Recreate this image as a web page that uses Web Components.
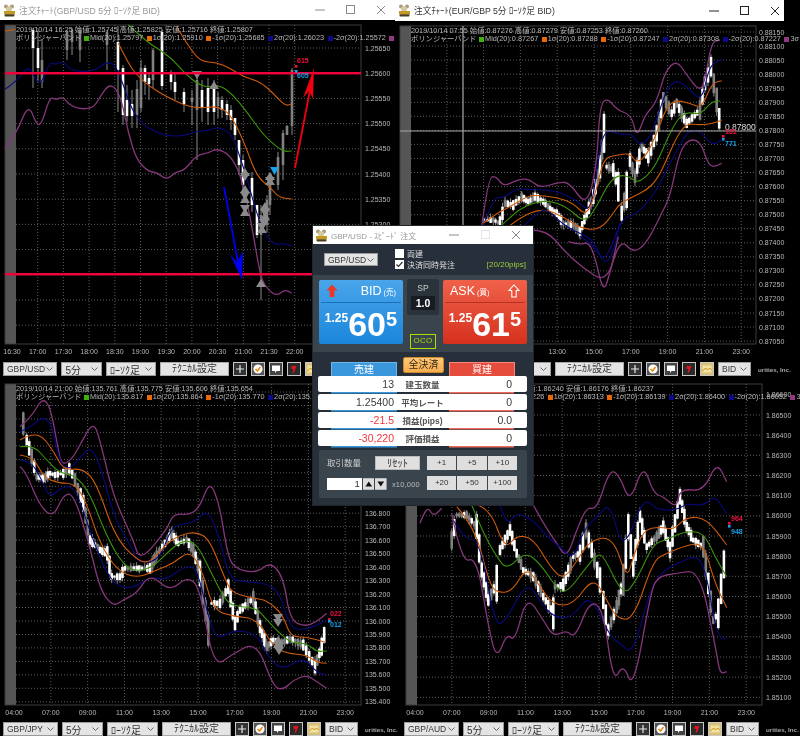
<!DOCTYPE html>
<html lang="ja">
<head>
<meta charset="utf-8">
<title>注文チャート</title>
<style>
  html, body { margin: 0; background: #000; }
</style>
</head>
<body>
<fx-desktop>
  <fx-window caption="注文ﾁｬｰﾄ(GBP/USD 5分 ﾛｰｿｸ足 BID)" box="0,0,395,380" bar="395">
    <fx-chart name="gu"></fx-chart>
  </fx-window>
  <fx-window caption="注文ﾁｬｰﾄ(EUR/GBP 5分 ﾛｰｿｸ足 BID)" box="395,0,405,380" bar="389" active>
    <fx-chart name="eg"></fx-chart>
  </fx-window>
  <fx-window box="0,380,400,356">
    <fx-chart name="gj"></fx-chart>
  </fx-window>
  <fx-window box="400,380,400,356">
    <fx-chart name="ga"></fx-chart>
  </fx-window>
  <fx-order></fx-order>
</fx-desktop>

<script>
const FONT = '"Liberation Sans", "Noto Sans CJK JP", sans-serif';

// coordinates below were read off 3x crops, so they get divided back down
const zoom = (pts, ox, oy) => pts.map(([x, y]) => [ox + x / 3, oy + y / 3]);

// axis and time labels that sit fully under the order dialog are left out
const underDialog = (x, y) => x > 313 && x < 515 && y - 3 >= 226 && y + 3 <= 505;

function smooth(pts) {
  let d = `M${pts[0][0].toFixed(1)} ${pts[0][1].toFixed(1)}`;
  for (let i = 1; i < pts.length - 1; i++) {
    const mx = (pts[i][0] + pts[i + 1][0]) / 2;
    const my = (pts[i][1] + pts[i + 1][1]) / 2;
    d += `Q${pts[i][0].toFixed(1)} ${pts[i][1].toFixed(1)} ${mx.toFixed(1)} ${my.toFixed(1)}`;
  }
  const last = pts[pts.length - 1];
  return d + `L${last[0].toFixed(1)} ${last[1].toFixed(1)}`;
}

// dense candles strung along a path; fixed seed so every run draws the same
function candlesAlong(pts, seed) {
  let s = seed;
  const rnd = () => (s = (s * 9301 + 49297) % 233280) / 233280;
  const out = [];
  for (let i = 0; i < pts.length - 1; i++) {
    const [x0, y0] = pts[i], [x1, y1] = pts[i + 1];
    const n = Math.max(1, Math.round(Math.abs(x1 - x0) / 2.6));
    for (let k = 0; k < n; k++) {
      const x = x0 + (x1 - x0) * k / n, y = y0 + (y1 - y0) * k / n;
      const h = 2 + rnd() * 5 + Math.abs(y1 - y0) / n;
      const top = y - h / 2, bot = y + h / 2;
      out.push([x, top - rnd() * 4, top, bot, bot + rnd() * 4, rnd() < 0.72 ? 'w' : 'g']);
    }
  }
  return out;
}

const LINE = { p3: '#86367a', b2: '#08087e', o1: '#d05c0c', g: '#3a930a' };

const CHARTS = {
  gu: {
    x: 0, top: 20, width: 395, height: 342, frame: [5, 25, 361, 344], labelX: 365,
    pair: 'GBP/USD', barPad: 3,
    ohlc: '2019/10/14 16:25 始値:1.25745 高値:1.25825 安値:1.25716 終値:1.25807',
    legend: ['1.25797', '1.25910', '1.25685', '1.26023', '1.25572'], three: '3',
    axis: { start: 1.2565, step: -0.0005, y: 48, dy: 25.2, count: 12, dec: 5 },
    times: ['16:30', '17:00', '17:30', '18:00', '18:30', '19:00', '19:30', '20:00', '20:30', '21:00', '21:30', '22:00'].map((t, i) => [t, 12 + i * 25.7]),
    lines: [
      [LINE.o1, [[5, 31], [15, 29.5]]],
      [LINE.p3, zoom([[15, 445], [50, 400], [85, 310], [110, 375], [125, 372], [150, 290], [165, 300], [190, 290], [205, 312], [235, 327], [280, 325], [300, 290], [325, 255], [345, 262], [365, 300], [385, 400], [410, 480], [445, 515], [470, 517], [500, 540], [525, 517], [555, 510], [590, 465], [625, 460], [650, 445], [690, 465], [720, 520], [745, 620], [771, 770], [785, 840], [805, 870], [830, 888], [855, 868], [875, 880]], 0, 0)],
      [LINE.b2, zoom([[15, 268], [50, 245], [85, 195], [110, 245], [125, 250], [150, 185], [165, 195], [190, 183], [205, 205], [235, 215], [285, 212], [320, 185], [345, 195], [365, 240], [395, 330], [430, 375], [465, 395], [500, 408], [555, 408], [590, 392], [625, 392], [655, 380], [695, 400], [720, 470], [745, 550], [770, 640], [790, 690], [800, 710], [825, 735], [850, 730], [875, 737]], 0, 0)],
      [LINE.o1, zoom([[530, 80], [560, 130], [600, 185], [650, 187], [690, 205], [730, 230], [780, 245], [820, 280], [855, 318], [875, 312]], 0, 0)],
      [LINE.o1, zoom([[355, 130], [385, 190], [410, 225], [450, 260], [500, 290], [550, 315], [600, 325], [650, 318], [690, 340], [730, 420], [770, 530], [810, 560], [835, 592], [875, 597]], 0, 0)],
      [LINE.g, zoom([[385, 75], [440, 125], [480, 150], [520, 180], [550, 215], [590, 250], [620, 262], [660, 255], [700, 285], [740, 335], [790, 405], [830, 440], [855, 455], [875, 453]], 0, 0)]
    ],
    candles: [
      [33, 28, 30, 48, 88, 'w'], [38, 30, 48, 68, 82, 'w'], [42, 40, 60, 82, 88, 'g'], [67, 30, 32, 50, 60, 'g'], [72, 28, 30, 42, 55, 'g'], [80, 28, 30, 50, 62, 'g'], [107, 30, 32, 45, 70, 'g'],
      [118, 26, 42, 70, 112, 'w'], [123, 65, 68, 115, 125, 'w'], [127, 85, 100, 116, 122, 'w'], [132, 90, 104, 116, 128, 'w'], [137, 80, 89, 115, 128, 'g'], [141, 60, 68, 108, 112, 'g'], [145, 65, 68, 82, 95, 'w'], [149, 72, 78, 84, 100, 'w'], [153, 48, 50, 80, 88, 'g'],
      [162, 30, 32, 86, 90, 'w'], [171, 70, 74, 82, 90, 'w'], [175, 72, 82, 92, 100, 'w'], [184, 88, 92, 104, 112, 'w'], [192, 90, 98, 102, 125, 'g'], [197, 75, 80, 110, 160, 'g'], [202, 80, 90, 108, 122, 'w'], [208, 78, 88, 112, 125, 'w'], [214, 80, 88, 112, 125, 'w'],
      [218, 92, 97, 106, 118, 'g'], [222, 96, 100, 110, 118, 'w'], [227, 100, 104, 115, 120, 'w'], [231, 105, 110, 120, 130, 'w'], [235, 118, 118, 135, 140, 'w'], [239, 140, 140, 165, 175, 'w'], [243, 155, 160, 185, 195, 'w'], [252, 172, 178, 205, 212, 'w'], [257, 205, 205, 235, 238, 'w'],
      [261, 205, 215, 235, 300, 'g'], [267, 195, 200, 225, 232, 'g'], [270, 175, 180, 205, 215, 'g'], [278, 152, 157, 185, 190, 'g'], [283, 130, 133, 165, 180, 'g'], [287, 125, 126, 135, 135, 'g'], [292, 68, 70, 126, 135, 'g']
    ],
    hlines: [[73, 5, 361], [274, 5, 314]],
    ups: [[214, 86], [245, 173], [245, 190], [245, 200], [245, 213], [265, 207], [265, 217], [262, 230], [270, 177], [270, 182], [261, 284]],
    downs: [[197, 74], [245, 176], [245, 195], [245, 208], [265, 212], [262, 226], [270, 180], [264, 222]],
    blueDown: [274.5, 170],
    arrows: [
      ['#f00010', [[295, 168], [310, 90]], [[314, 68], [303, 98], [309, 91], [313, 99]]],
      ['#0000f0', [[224, 187], [238, 262]], [[242, 280], [230, 254], [237, 262], [243, 251]]]
    ],
    tags: [['615', 297, 63, '#f0103f', 296, 66], ['605', 297, 78, '#18a0e8', 296, 71]]
  },
  eg: {
    x: 395, top: 21, width: 405, height: 341, frame: [400, 26, 756, 344], labelX: 759,
    pair: 'EUR/GBP', barPad: 1,
    ohlc: '2019/10/14 07:55 始値:0.87276 高値:0.87279 安値:0.87253 終値:0.87260',
    legend: ['0.87267', '0.87288', '0.87247', '0.87308', '0.87227'], three: '3σ',
    axis: { start: 0.8815, step: -0.0005, y: 32, dy: 14.05, count: 23, dec: 5 },
    times: ['04:00', '07:00', '09:00', '11:00', '13:00', '15:00', '17:00', '19:00', '21:00', '23:00'].map((t, i) => [t, 410 + i * 36.8]),
    lines: [
      [LINE.p3, zoom([[245, 680], [265, 530], [290, 530], [310, 560], [350, 540], [385, 535], [420, 565], [480, 545], [510, 550], [560, 620], [590, 500], [600, 310], [625, 295], [650, 330], [695, 345], [710, 415], [735, 345], [755, 325], [775, 290], [795, 215], [830, 180], [860, 225], [900, 275], [915, 240], [935, 125], [960, 120]], 400, 0)],
      [LINE.b2, zoom([[245, 690], [280, 590], [310, 595], [350, 565], [400, 570], [460, 570], [530, 600], [570, 640], [590, 520], [610, 385], [660, 405], [695, 400], [710, 430], [740, 430], [770, 360], [800, 265], [830, 240], [860, 260], [905, 305], [925, 210], [945, 185], [965, 180]], 400, 0)],
      [LINE.o1, zoom([[250, 670], [290, 640], [330, 620], [380, 590], [410, 585], [470, 592], [520, 610], [560, 650], [590, 570], [610, 475], [650, 465], [690, 460], [710, 490], [740, 465], [770, 400], [800, 320], [830, 300], [870, 310], [905, 325], [935, 250], [965, 242]], 400, 0)],
      [LINE.g, zoom([[260, 720], [330, 650], [380, 615], [440, 600], [500, 620], [555, 670], [590, 620], [625, 550], [655, 525], [690, 530], [710, 548], [740, 530], [770, 490], [800, 420], [830, 360], [860, 335], [900, 345], [935, 305], [960, 303]], 400, 0)],
      [LINE.o1, zoom([[300, 700], [360, 650], [430, 625], [490, 650], [540, 685], [600, 690], [640, 640], [660, 610], [700, 590], [740, 570], [770, 540], [800, 480], [830, 410], [860, 370], [900, 375], [940, 370], [965, 360]], 400, 0)],
      [LINE.b2, zoom([[360, 690], [410, 640], [440, 625], [490, 675], [540, 700], [580, 720], [615, 800], [645, 745], [660, 660], [710, 640], [740, 610], [770, 570], [810, 490], [850, 415], [870, 390], [905, 395], [935, 437], [965, 420]], 400, 0)],
      [LINE.p3, zoom([[390, 690], [440, 690], [490, 750], [550, 805], [620, 850], [660, 715], [700, 760], [740, 730], [785, 640], [810, 590], [835, 470], [860, 420], [900, 420], [925, 495], [945, 500], [965, 490]], 400, 0)],
      [LINE.p3, zoom([[115, 125], [150, 135], [175, 125], [195, 170], [220, 280], [240, 220], [265, 110]], 530, 200)],
      [LINE.b2, zoom([[150, 108], [185, 130], [220, 183], [245, 140], [270, 70]], 530, 200)]
    ],
    path: zoom([[255, 660], [280, 660], [300, 670], [315, 610], [340, 615], [365, 590], [385, 605], [405, 590], [430, 605], [450, 625], [470, 640], [490, 670], [520, 675], [540, 695], [560, 640], [580, 590], [600, 500], [612, 400], [620, 500], [640, 510], [655, 560], [665, 640], [680, 570], [690, 480], [705, 530], [725, 440], [745, 470], [770, 400], [790, 290], [815, 340], [830, 310], [860, 370], [900, 330], [915, 250], [933, 200], [950, 300], [965, 410]], 400, 0),
    tags: [['181', 725, 134, '#f0103f', 723, 136], ['771', 725, 146, '#18a0e8', 723, 139]],
    cross: [463, 131],
    crossLabel: ['0.87800', 725, 130]
  },
  gj: {
    x: 0, top: 380, width: 400, height: 342, frame: [5, 384, 361, 705], labelX: 365,
    pair: 'GBP/JPY', barPad: 3,
    ohlc: '2019/10/14 21:00 始値:135.761 高値:135.775 安値:135.606 終値:135.654',
    legend: ['135.817', '135.864', '135.770', '135.911', '135.723'], three: '3σ', limit: 4,
    axis: { start: 137.7, step: -0.1, y: 392, dy: 13.47, count: 24, dec: 3 },
    times: ['04:00', '07:00', '09:00', '11:00', '13:00', '15:00', '17:00', '19:00', '21:00', '23:00'].map((t, i) => [t, 14 + i * 36.8]),
    lines: [
      [LINE.p3, zoom([[60, 140], [95, 110], [125, 55], [150, 75], [175, 210], [185, 255], [215, 240], [245, 185], [280, 125], [300, 180], [340, 350], [400, 480], [420, 545], [500, 450], [520, 400], [570, 405], [600, 380], [630, 300], [660, 380], [680, 510], [700, 565], [770, 580], [810, 545], [850, 590], [870, 720], [915, 740], [950, 725], [980, 700]], 0, 380)],
      [LINE.b2, zoom([[60, 155], [95, 140], [125, 110], [155, 130], [180, 250], [210, 270], [245, 225], [275, 200], [305, 270], [345, 420], [400, 510], [415, 550], [480, 540], [515, 435], [580, 430], [625, 385], [660, 480], [690, 600], [740, 605], [800, 610], [840, 640], [870, 745], [920, 750], [980, 720]], 0, 380)],
      [LINE.o1, zoom([[60, 180], [85, 165], [125, 165], [165, 220], [190, 270], [250, 265], [290, 310], [345, 470], [410, 540], [450, 550], [500, 490], [540, 465], [590, 455], [630, 480], [680, 610], [700, 640], [760, 655], [800, 660], [850, 705], [870, 770], [920, 770], [975, 787]], 0, 380)],
      [LINE.g, zoom([[60, 200], [100, 195], [140, 240], [180, 280], [225, 285], [270, 340], [320, 470], [370, 555], [410, 575], [460, 560], [510, 510], [550, 480], [590, 490], [630, 570], [680, 670], [720, 680], [770, 685], [800, 720], [850, 770], [880, 790], [920, 790], [950, 815], [980, 813]], 0, 380)],
      [LINE.o1, zoom([[60, 225], [100, 230], [130, 290], [175, 310], [225, 310], [260, 370], [300, 490], [350, 570], [410, 595], [470, 570], [520, 550], [570, 510], [610, 580], [640, 690], [700, 710], [770, 715], [820, 800], [860, 820], [920, 825], [950, 848], [980, 850]], 0, 380)],
      [LINE.b2, zoom([[60, 240], [95, 245], [125, 300], [150, 355], [185, 320], [225, 320], [265, 440], [310, 560], [350, 620], [400, 625], [450, 590], [500, 600], [550, 560], [590, 560], [625, 710], [650, 780], [700, 750], [770, 760], [810, 840], [850, 870], [910, 830], [950, 878], [980, 885]], 0, 380)],
      [LINE.p3, zoom([[60, 260], [75, 270], [120, 380], [160, 412], [190, 345], [220, 340], [265, 480], [300, 630], [340, 680], [370, 660], [410, 640], [450, 580], [510, 635], [560, 590], [600, 620], [640, 865], [700, 820], [770, 785], [820, 920], [850, 930], [880, 900], [920, 885], [950, 905], [980, 925]], 0, 380)]
    ],
    path: zoom([[70, 130], [80, 180], [95, 230], [110, 290], [130, 295], [150, 280], [165, 285], [190, 280], [208, 265], [225, 300], [250, 370], [270, 480], [300, 510], [322, 520], [335, 590], [360, 590], [375, 565], [410, 565], [450, 565], [470, 525], [495, 490], [515, 460], [535, 490], [560, 480], [580, 510], [600, 580], [625, 750], [635, 670], [660, 670], [685, 620], [705, 730], [720, 690], [760, 655], [780, 740], [800, 800], [820, 780], [845, 790], [870, 775], [910, 795], [945, 860], [965, 800], [980, 730]], 0, 380),
    ups: [[278, 641], [278, 645]],
    downs: [[278, 617], [278, 622], [279, 650]],
    tags: [['022', 330, 616, '#f0103f', 329, 619], ['012', 330, 627, '#18a0e8', 329, 621]]
  },
  ga: {
    x: 400, top: 380, width: 400, height: 342, frame: [406, 384, 762, 705], labelX: 766,
    pair: 'GBP/AUD', barPad: 4,
    ohlc: '2019/10/14 21:00 始値:1.86198 高値:1.86240 安値:1.86176 終値:1.86237',
    legend: ['1.86226', '1.86313', '1.86139', '1.86400', '1.86052'], three: '3σ',
    axis: { start: 1.866, step: -0.001, y: 394.8, dy: 20.17, count: 16, dec: 5 },
    times: ['04:00', '07:00', '09:00', '11:00', '13:00', '15:00', '17:00', '19:00', '21:00', '23:00'].map((t, i) => [t, 415 + i * 36.8]),
    lines: [
      [LINE.p3, zoom([[60, 430], [80, 375], [100, 410], [125, 385]], 400, 380)],
      [LINE.p3, zoom([[400, 375], [430, 430], [470, 490], [500, 535], [530, 450], [560, 380], [590, 390], [630, 265], [660, 290], [690, 370], [730, 250], [760, 340], [790, 350], [830, 385], [840, 325], [910, 335], [950, 245], [980, 305]], 400, 380)],
      [LINE.b2, zoom([[300, 375], [320, 440], [350, 395], [405, 425], [440, 470], [480, 500], [520, 540], [550, 450], [600, 400], [630, 370], [670, 520], [730, 350], [770, 390], [830, 390], [860, 370], [910, 378], [945, 345], [980, 402]], 400, 380)],
      [LINE.o1, zoom([[230, 375], [270, 385], [315, 510], [350, 465], [400, 475], [450, 560], [490, 600], [530, 545], [570, 480], [640, 470], [680, 600], [700, 530], [730, 450], [780, 440], [820, 450], [860, 410], [920, 415], [980, 495]], 400, 380)],
      [LINE.g, zoom([[215, 375], [250, 460], [290, 530], [320, 570], [375, 515], [420, 550], [470, 625], [500, 640], [560, 560], [590, 525], [610, 525], [670, 650], [710, 600], [760, 490], [800, 480], [850, 455], [910, 455], [945, 530], [980, 590]], 400, 380)],
      [LINE.o1, zoom([[170, 380], [225, 440], [270, 620], [300, 640], [340, 630], [380, 560], [420, 620], [460, 675], [520, 675], [580, 590], [620, 660], [650, 715], [700, 720], [760, 540], [800, 520], [860, 495], [910, 490], [945, 610], [980, 683]], 400, 380)],
      [LINE.b2, zoom([[160, 420], [190, 475], [240, 480], [285, 740], [320, 720], [380, 600], [430, 680], [470, 715], [520, 710], [570, 640], [630, 770], [660, 790], [700, 825], [760, 590], [850, 540], [910, 525], [950, 770], [980, 778]], 400, 380)],
      [LINE.p3, zoom([[155, 400], [185, 550], [230, 530], [265, 740], [290, 840], [320, 760], [345, 785], [380, 645], [430, 720], [460, 770], [500, 750], [525, 775], [570, 660], [610, 690], [640, 910], [670, 850], [700, 930], [750, 650], [770, 590], [830, 580], [900, 570], [950, 820], [960, 882], [980, 875]], 400, 380)]
    ],
    path: zoom([[155, 480], [170, 405], [200, 405], [230, 440], [245, 570], [265, 660], [290, 610], [300, 510], [330, 450], [350, 520], [370, 570], [400, 590], [430, 650], [460, 700], [465, 620], [490, 615], [520, 530], [540, 520], [558, 450], [575, 510], [600, 600], [610, 660], [625, 750], [650, 680], [670, 600], [685, 440], [700, 560], [720, 410], [740, 500], [770, 470], [790, 440], [810, 510], [840, 350], [860, 440], [880, 480], [910, 500], [940, 720], [955, 700], [980, 480]], 400, 380),
    tags: [['964', 731, 521, '#f0103f', 729, 523], ['948', 731, 534, '#18a0e8', 729, 526]]
  }
};

const LOGO = `<svg width="13" height="13" viewBox="0 0 13 13">
  <circle cx="3" cy="2.5" r="2" fill="#a89a7c"/><circle cx="9" cy="2.5" r="2" fill="#a89a7c"/>
  <circle cx="6" cy="5" r="3" fill="#d5c9a2"/><rect x="1" y="7" width="11" height="3.4" fill="#c39a22"/>
  <rect x="1.5" y="10.2" width="10" height="2.3" rx="1" fill="#4a3d1c"/></svg>`;

class FxDesktop extends HTMLElement {
  constructor() {
    super();
    this.attachShadow({mode: 'open'});
    // the reference is a rescaled capture, everything in it is slightly soft
    this.shadowRoot.innerHTML = `
      <style>:host { display: block; position: relative; width: 800px; height: 736px; overflow: hidden; background: #000; font-family: ${FONT}; filter: blur(.35px); }</style>
      <slot></slot>`;
  }
}
customElements.define('fx-desktop', FxDesktop);

class FxTitlebar extends HTMLElement {
  constructor() {
    super();
    this.attachShadow({mode: 'open'});
    const active = this.hasAttribute('active');
    const ink = active ? '#222' : '#8a8a8a';
    this.shadowRoot.innerHTML = `
      <style>
        :host { display: flex; align-items: center; background: #fff; color: ${active ? '#333' : '#999'}; font: ${this.getAttribute('size') || 8.7}px ${FONT}; box-sizing: border-box; padding-left: ${this.getAttribute('pad') || 3}px; overflow: hidden; white-space: nowrap; }
        .cap { margin-left: 3px; flex: 1; }
        .btns { display: flex; gap: ${this.getAttribute('gap') || 15}px; padding-right: ${this.getAttribute('end') || 5}px; align-items: center; }
        svg.b { display: block; }
      </style>
      ${LOGO}
      <span class="cap"><slot></slot></span>
      <span class="btns">
        <svg class="b" width="16" height="10" viewBox="0 0 16 10"><path d="M3 5h10" stroke="${ink}"/></svg>
        <svg class="b" width="16" height="10" viewBox="0 0 16 10"><rect x="3.5" y=".5" width="8" height="8" fill="none" stroke="${this.getAttribute('mid') || ink}"/></svg>
        <svg class="b" width="16" height="10" viewBox="0 0 16 10"><path d="M3 1l8 8M11 1l-8 8" stroke="${ink}"/></svg>
      </span>`;
  }
}
customElements.define('fx-titlebar', FxTitlebar);

class FxWindow extends HTMLElement {
  constructor() {
    super();
    this.attachShadow({mode: 'open'});
    const [x, y, w, h] = this.getAttribute('box').split(',');
    const cap = this.getAttribute('caption');
    const bar = this.getAttribute('bar') || w;
    const active = this.hasAttribute('active');
    this.shadowRoot.innerHTML = `
      <style>
        :host { position: absolute; left: ${x}px; top: ${y}px; width: ${w}px; height: ${h}px; background: #000; display: flex; flex-direction: column; overflow: hidden; }
        fx-titlebar { width: ${bar}px; height: ${active ? 21 : 20}px; flex: none; }
      </style>
      ${cap ? `<fx-titlebar ${active ? 'active end="0"' : ''}>${cap}</fx-titlebar>` : ''}
      <slot></slot>`;
  }
}
customElements.define('fx-window', FxWindow);

class FxSelect extends HTMLElement {
  constructor() {
    super();
    this.attachShadow({mode: 'open'});
    this.shadowRoot.innerHTML = `
      <style>
        :host { display: flex; align-items: center; justify-content: space-between; box-sizing: border-box; background: #e4e4e4; border: 1px solid #9a9a9a; color: #333; font: 8.5px ${FONT}; padding: 0 3px; height: 14px; white-space: nowrap; overflow: hidden; }
        svg { flex: none; }
      </style>
      <span><slot></slot></span>
      <svg width="7" height="4" viewBox="0 0 7 4"><path d="M.5.5l3 3 3-3" fill="none" stroke="#666"/></svg>`;
  }
}
customElements.define('fx-select', FxSelect);

class FxToolbar extends HTMLElement {
  constructor() {
    super();
    this.attachShadow({mode: 'open'});
    const pair = this.getAttribute('pair');
    this.shadowRoot.innerHTML = `
      <style>
        :host { display: flex; align-items: center; gap: 4px; height: 14px; padding-left: ${this.getAttribute('pad')}px; flex: none; font: 10px ${FONT}; }
        .pair { width: 55px; } .tf { width: 41px; } .kind { width: 51px; } .bid { width: 33px; }
        .tf, .kind { font-size: 10px; }
        button { all: unset; box-sizing: border-box; width: 69px; height: 14px; background: #e4e4e4; border: 1px solid #aaa; color: #333; font: 10px ${FONT}; text-align: center; line-height: 12px; }
        .ic { box-sizing: border-box; width: 14px; height: 14px; display: block; border: 1px solid #c8c8c8; flex: none; }
        .tools { display: flex; gap: 4px; }
        .sec { color: #aaa; font: bold 6.2px ${FONT}; margin-left: 3px; white-space: nowrap; }
      </style>
      <fx-select class="pair">${pair}</fx-select>
      <fx-select class="tf">5分</fx-select>
      <fx-select class="kind">ﾛｰｿｸ足</fx-select>
      <button>ﾃｸﾆｶﾙ設定</button>
      <div class="tools">
        <svg class="ic" viewBox="0 0 12 12" style="background:#333"><path d="M6 2v8M2 6h8" stroke="#e8e8e8" stroke-width="1.2"/></svg>
        <svg class="ic" viewBox="0 0 12 12" style="background:#555"><circle cx="6" cy="6" r="4.6" fill="#fff"/><path d="M3.5 6l2 2 3-4" fill="none" stroke="#ee8a10" stroke-width="1.6"/></svg>
        <svg class="ic" viewBox="0 0 12 12" style="background:#444"><path d="M2 2.5h8v5.5H6.5L5 10V8H2z" fill="#fff"/></svg>
        <svg class="ic" viewBox="0 0 12 12" style="background:#2a2a2a"><path d="M3.5 3h5L6 9.5 4.5 10l1-4H3.5z" fill="#e0141e"/></svg>
        <svg class="ic" viewBox="0 0 12 12" style="background:#d8c07a"><rect x="1.5" y="2.5" width="9" height="7" fill="#f2e2a2"/><path d="M1.5 8l3-3 2 2 2-2 2 2" fill="none" stroke="#c98d18"/></svg>
      </div>
      <fx-select class="bid">BID</fx-select>
      <span class="sec">urities, Inc.</span>`;
  }
}
customElements.define('fx-toolbar', FxToolbar);

class FxLegend extends HTMLElement {
  constructor() {
    super();
    this.attachShadow({mode: 'open'});
    const vals = this.getAttribute('vals').split(',');
    const names = ['Mid(20)', '1σ(20)', '-1σ(20)', '2σ(20)', '-2σ(20)'];
    const colours = ['#3fb00c', '#e8680a', '#e8680a', '#0b0b8a', '#0b0b8a'];
    const limit = +this.getAttribute('limit') || names.length;
    const items = names.slice(0, limit).map((n, i) => `<i style="background:${colours[i]}"></i><span class="v">${n}:${vals[i]}</span>`).join('');
    const tail = limit < names.length ? '' : `<i style="background:#8f3a80"></i>${this.getAttribute('three')}`;
    this.shadowRoot.innerHTML = `
      <style>
        :host { display: block; position: absolute; left: ${this.getAttribute('left')}px; top: ${this.getAttribute('top')}px; color: #b8b8b8; font: 7.3px/8px ${FONT}; white-space: nowrap; pointer-events: none; }
        .row { display: flex; align-items: center; }
        i { width: 5px; height: 5px; margin: 0 1px 0 3.5px; display: block; flex: none; }
        .name { margin-right: -1px; }
      </style>
      <div class="row">${this.getAttribute('ohlc')}</div>
      <div class="row"><span class="name">ボリンジャーバンド</span>${items}${tail}</div>`;
  }
}
customElements.define('fx-legend', FxLegend);

class FxChart extends HTMLElement {
  constructor() {
    super();
    this.attachShadow({mode: 'open'});
    const c = CHARTS[this.getAttribute('name')];
    const [l, t, r, b] = c.frame;
    const timesY = b + 9.5;
    let svg = '';

    // grid and grey strip on the left of each plot
    svg += `<rect x="${l}" y="${t}" width="11" height="${b - t}" fill="#555"/>`;
    svg += `<rect x="${l}" y="${t}" width="${r - l}" height="${b - t}" fill="none" stroke="#3c3c3c"/>`;
    const labels = [];
    for (let i = 0; i < c.axis.count; i++) {
      const y = c.axis.y + i * c.axis.dy;
      if (y > b - 2) break;
      if (y > t) svg += `<path d="M${l + 11} ${y.toFixed(1)}H${r}" stroke="#5c5c5c" stroke-dasharray="1 2"/>`;
      if (!underDialog(c.labelX, y)) labels.push(`<text x="${c.labelX}" y="${(y + 2.5).toFixed(1)}">${(c.axis.start + i * c.axis.step).toFixed(c.axis.dec)}</text>`);
    }
    c.times.forEach(([label, x]) => {
      svg += `<path d="M${x} ${t}V${b}" stroke="#5c5c5c" stroke-dasharray="1 2"/>`;
      if (!underDialog(x, timesY - 2)) svg += `<text x="${x}" y="${timesY}" text-anchor="middle">${label}</text>`;
    });
    svg += labels.join('');

    // candles first, bands on top
    const candles = c.candles || candlesAlong(c.path, 7 + c.x + c.top);
    candles.forEach(([x, wt, top, bot, wb]) => {
      svg += `<path d="M${x.toFixed(1)} ${wt.toFixed(1)}V${wb.toFixed(1)}" stroke="#8a8a8a"/>`;
    });
    candles.forEach(([x, , top, bot, , kind]) => {
      svg += `<rect x="${(x - 1.3).toFixed(1)}" y="${top.toFixed(1)}" width="2.6" height="${(bot - top).toFixed(1)}" fill="${kind === 'w' ? '#fff' : '#808080'}"/>`;
    });
    c.lines.forEach(([colour, pts]) => {
      svg += `<path d="${smooth(pts)}" fill="none" stroke="${colour}" stroke-width="${colour === LINE.p3 ? 1.3 : 1.1}" stroke-linejoin="round"/>`;
    });

    (c.ups || []).forEach(([x, y]) => { svg += `<path d="M${x} ${y - 5}l5 8h-10z" fill="#8a8a8a"/>`; });
    (c.downs || []).forEach(([x, y]) => { svg += `<path d="M${x} ${y + 5}l5 -8h-10z" fill="#8a8a8a"/>`; });
    if (c.blueDown) svg += `<path d="M${c.blueDown[0]} ${c.blueDown[1] + 5}l4.5 -8h-9z" fill="#18a0e8"/>`;

    (c.hlines || []).forEach(([y, x0, x1]) => { svg += `<rect x="${x0}" y="${y - 1}" width="${x1 - x0}" height="2.4" fill="#f2003c"/>`; });
    (c.arrows || []).forEach(([colour, shaft, head]) => {
      svg += `<path d="M${shaft[0].join(' ')}L${shaft[1].join(' ')}" stroke="${colour}" stroke-width="1.8"/>`;
      svg += `<polygon points="${head.map(p => p.join(',')).join(' ')}" fill="${colour}"/>`;
    });
    if (c.cross) {
      svg += `<path d="M${c.cross[0]} ${t}V${b}M${l} ${c.cross[1]}H${r}" stroke="#a8a8a8" stroke-width="1.2"/>`;
      svg += `<text x="${c.crossLabel[1]}" y="${c.crossLabel[2]}" style="fill:#ddd;font-size:8.5px">${c.crossLabel[0]}</text>`;
    }
    (c.tags || []).forEach(([txt, x, y, colour, mx, my]) => {
      svg += `<rect x="${mx - 1}" y="${my - 1}" width="2.6" height="2.6" fill="${colour}"/>`;
      svg += `<text x="${x}" y="${y}" style="fill:${colour};font-weight:bold">${txt}</text>`;
    });

    const view = `${c.x} ${c.top} ${c.width} ${c.height}`;
    this.shadowRoot.innerHTML = `
      <style>
        :host { display: flex; flex-direction: column; position: relative; }
        svg.plot { display: block; flex: none; }
        text { fill: #b8b8b8; font: 7px ${FONT}; }
      </style>
      <svg class="plot" width="${c.width}" height="${c.height}" viewBox="${view}">${svg}</svg>
      <fx-legend left="${l + 11 - c.x}" top="${t - c.top + 1}" ohlc="${c.ohlc}" vals="${c.legend.join(',')}" three="${c.three}" limit="${c.limit || ''}"></fx-legend>
      <fx-toolbar pair="${c.pair}" pad="${c.barPad}"></fx-toolbar>`;
  }
}
customElements.define('fx-chart', FxChart);

class FxQuote extends HTMLElement {
  constructor() {
    super();
    this.attachShadow({mode: 'open'});
    const ask = this.getAttribute('side') === 'ask';
    const arrow = ask
      ? `<svg width="12" height="14" viewBox="0 0 12 14"><path d="M6 1l5 5.5H8.2V13H3.8V6.5H1z" fill="#e8503a" stroke="#fff" stroke-width="1.1"/></svg>`
      : `<svg width="12" height="14" viewBox="0 0 12 14"><path d="M6 .5l5.5 6H8.4V13H3.6V6.5H.5z" fill="#e8392a"/></svg>`;
    const name = `<span class="nm">${this.getAttribute('name')}</span><small>(${ask ? '買' : '売'})</small>`;
    this.shadowRoot.innerHTML = `
      <style>
        :host { display: flex; flex-direction: column; box-sizing: border-box; height: 64px; border-radius: 2px; color: #fff; background: ${ask ? 'linear-gradient(#f0614a,#d5311d)' : 'linear-gradient(#4aa5ea,#1a86dc)'}; padding: 0 2px; }
        .head { height: 22px; display: flex; align-items: center; justify-content: space-between; border-bottom: 1px solid ${ask ? '#b93120' : '#1b6fb5'}; padding: 0 5px; flex: none; }
        .lbl { display: flex; align-items: baseline; gap: 2px; }
        .nm { font: 12.5px ${FONT}; }
        small { font: 7.5px ${FONT}; }
        .price { display: flex; align-items: flex-start; justify-content: center; margin-top: 3px; }
        .pre { font: bold 12px ${FONT}; margin-top: 5px; }
        .big { font: bold 34px/36px ${FONT}; }
        .pip { font: bold 20px/20px ${FONT}; margin-top: 3px; }
      </style>
      <div class="head">${ask ? `<span class="lbl">${name}</span>${arrow}` : `${arrow}<span class="lbl">${name}</span>`}</div>
      <div class="price"><span class="pre">${this.getAttribute('pre')}</span><span class="big">${this.getAttribute('big')}</span><span class="pip">${this.getAttribute('pip')}</span></div>`;
  }
}
customElements.define('fx-quote', FxQuote);

class FxPosRow extends HTMLElement {
  constructor() {
    super();
    this.attachShadow({mode: 'open'});
    this.shadowRoot.innerHTML = `
      <style>
        :host { display: block; height: 18px; background: linear-gradient(to right, transparent 13px, #3b97dc 13px, #3b97dc 79px, transparent 79px, transparent 131px, #ee6a5a 131px, #ee6a5a 196px, transparent 196px) 0 16px / 100% 1.5px no-repeat; }
        .box { display: grid; grid-template-columns: 76px 57px 61px; height: 16px; background: #fff; border-radius: 2px; align-items: center; font: 10.5px ${FONT}; color: #3a3a3a; }
        .l, .r { text-align: right; }
        .l { color: ${this.hasAttribute('loss') ? '#f0343c' : '#3a3a3a'}; }
        .m { text-align: center; font: bold 8.5px ${FONT}; color: #555; white-space: nowrap; }
      </style>
      <div class="box"><span class="l">${this.getAttribute('left')}</span><span class="m"><slot></slot></span><span class="r">${this.getAttribute('right')}</span></div>`;
  }
}
customElements.define('fx-pos-row', FxPosRow);

class FxOrder extends HTMLElement {
  constructor() {
    super();
    this.attachShadow({mode: 'open'});
    const check = on => `<svg width="9" height="9" viewBox="0 0 9 9"><rect width="9" height="9" fill="#fff"/>${on ? '<path d="M1.5 4.5l2 2 4-4.5" fill="none" stroke="#333" stroke-width="1.2"/>' : ''}</svg>`;
    const steps = v => v.map(n => `<button class="st">+${n}</button>`).join('');
    this.shadowRoot.innerHTML = `
      <style>
        :host { position: absolute; left: 313px; top: 226px; width: 220px; height: 279px; display: flex; flex-direction: column; background: #27303a; color: #ddd; box-shadow: 0 0 0 1px #20262c; font-family: ${FONT}; }
        fx-titlebar { height: 18px; flex: none; }
        .top { height: 31px; display: flex; padding: 9px 7px 0 11px; box-sizing: border-box; flex: none; }
        .top fx-select { width: 54px; height: 13px; }
        .chk { margin-left: 17px; display: flex; flex-direction: column; gap: 2px; margin-top: -4px; font: 8px ${FONT}; color: #ddd; }
        .chk label { display: flex; align-items: center; gap: 3px; height: 9px; }
        .pips { margin-left: auto; color: #9ccc3c; font: 8px ${FONT}; margin-top: 7px; }
        .band { height: 77px; flex: none; box-sizing: border-box; background: #3a444d; padding: 5px 6px 0; display: grid; grid-template-columns: 84px 32px 84px; column-gap: 4px; }
        .mid { display: flex; flex-direction: column; align-items: center; margin-top: -1px; }
        .sp { width: 32px; height: 36px; box-sizing: border-box; background: #2a333b; border-radius: 2px; text-align: center; font: 8.5px ${FONT}; color: #ccc; padding-top: 4px; }
        .sp b { display: block; margin: 3px 4px 0; height: 14px; background: #161c22; color: #fff; font: bold 10.5px/14px ${FONT}; }
        .oco { margin-top: 19px; box-sizing: border-box; width: 26px; height: 15px; border: 1.5px solid #a4e000; color: #a4e000; font: 8px/12px ${FONT}; text-align: center; letter-spacing: .3px; }
        .acts { height: 24px; flex: none; display: flex; align-items: flex-end; padding-left: 18px; }
        .acts button { all: unset; box-sizing: border-box; text-align: center; color: #fff; font: 10px/13px ${FONT}; width: 66px; height: 14px; }
        .acts .sell { background: #3b97dc; border: 1px solid #6cb8ee; border-bottom: 0; }
        .acts .buy { background: #e64c3c; border: 1px solid #f48a7e; border-bottom: 0; }
        .acts .all { width: 41px; height: 16px; margin: 0 5px 3px 6px; background: linear-gradient(#fdc878,#f6ad50); border: 1px solid #d08a2c; border-radius: 2px; color: #3a2a10; line-height: 14px; }
        .rows { margin-left: 5px; width: 209px; flex: none; }
        .pan { margin: 2px 0 0 6px; width: 208px; height: 48px; box-sizing: border-box; background: #3a444d; border-radius: 2px; padding: 6px 3px 0 8px; display: grid; grid-template-columns: 48px 45px 97px; grid-template-rows: 14px 14px; row-gap: 6px; flex: none; }
        .pan .qty { font: 8.5px/14px ${FONT}; color: #ccc; }
        button.rs { all: unset; box-sizing: border-box; text-align: center; background: #e0e0e0; color: #333; border: 1px solid #bbb; font: 10.5px/12px ${FONT}; }
        .stg { display: grid; grid-template-columns: repeat(3, 1fr); gap: 1px; margin-left: 7px; }
        button.st { all: unset; text-align: center; background: #dedede; color: #333; font: 8px/14px ${FONT}; }
        .inp { grid-column: 1 / 3; display: flex; align-items: center; margin-top: 2px; height: 12px; }
        .inp .v { box-sizing: border-box; width: 36px; height: 12px; background: #fff; color: #333; text-align: right; font: 9.5px/12px ${FONT}; padding-right: 2px; }
        .inp svg { margin-left: 1px; display: block; }
        .inp .x { margin-left: 5px; font: 7.5px ${FONT}; color: #bbb; letter-spacing: .2px; }
      </style>
      <fx-titlebar pad="2" gap="15.5" end="8" size="8" mid="#e4e4e4">GBP/USD - ｽﾋﾟｰﾄﾞ 注文</fx-titlebar>
      <div class="top">
        <fx-select>GBP/USD</fx-select>
        <div class="chk">
          <label>${check(false)}両建</label>
          <label>${check(true)}決済同時発注</label>
        </div>
        <span class="pips">[20/20pips]</span>
      </div>
      <div class="band">
        <fx-quote side="bid" name="BID" pre="1.25" big="60" pip="5"></fx-quote>
        <div class="mid">
          <div class="sp">SP<b>1.0</b></div>
          <div class="oco">OCO</div>
        </div>
        <fx-quote side="ask" name="ASK" pre="1.25" big="61" pip="5"></fx-quote>
      </div>
      <div class="acts">
        <button class="sell">売建</button><button class="all">全決済</button><button class="buy">買建</button>
      </div>
      <div class="rows">
        <fx-pos-row left="13" right="0">建玉数量</fx-pos-row>
        <fx-pos-row left="1.25400" right="0">平均レート</fx-pos-row>
        <fx-pos-row left="-21.5" right="0.0" loss>損益(pips)</fx-pos-row>
        <fx-pos-row left="-30,220" right="0" loss>評価損益</fx-pos-row>
      </div>
      <div class="pan">
        <span class="qty">取引数量</span>
        <button class="rs">ﾘｾｯﾄ</button>
        <div class="stg">${steps([1, 5, 10])}</div>
        <div class="inp">
          <span class="v">1</span>
          <svg width="12" height="12" viewBox="0 0 12 12"><rect width="12" height="12" fill="#ddd"/><path d="M6 3.5l3.5 5h-7z" fill="#111"/></svg>
          <svg width="12" height="12" viewBox="0 0 12 12"><rect width="12" height="12" fill="#ddd"/><path d="M6 8.5l3.5-5h-7z" fill="#111"/></svg>
          <span class="x">x10,000</span>
        </div>
        <div class="stg">${steps([20, 50, 100])}</div>
      </div>`;
  }
}
customElements.define('fx-order', FxOrder);
</script>
</body>
</html>
